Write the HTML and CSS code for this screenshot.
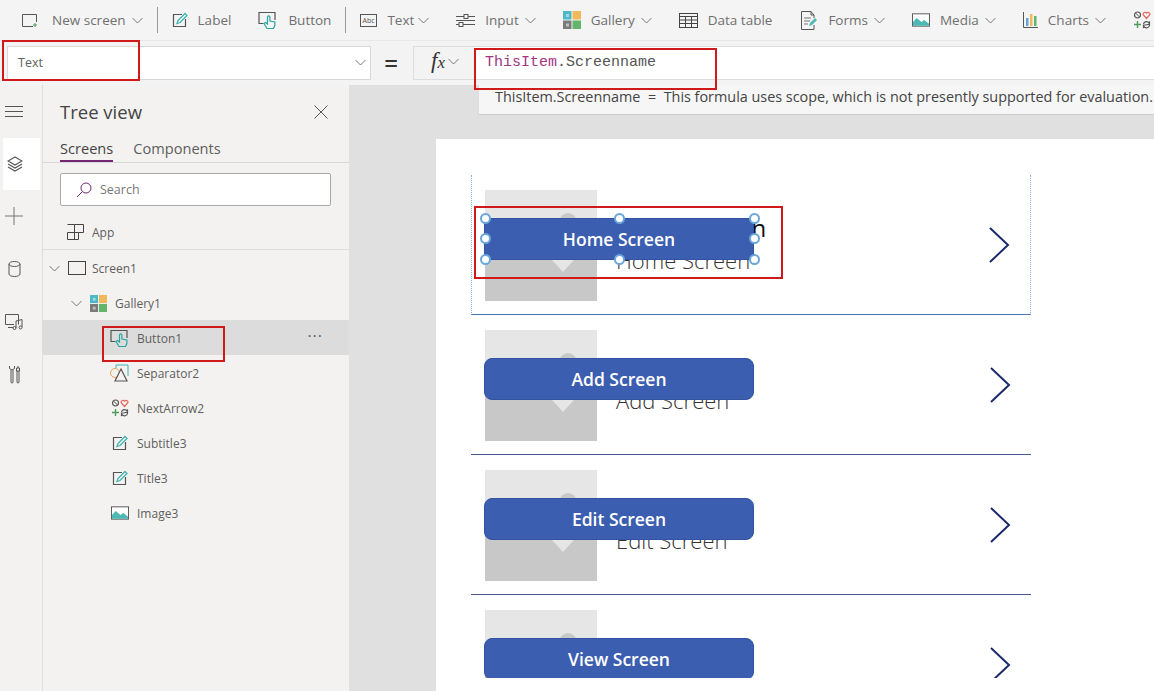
FILE: index.html
```html
<!DOCTYPE html>
<html lang="en">

<head>
  <meta charset="UTF-8">
  <meta name="viewport" content="width=device-width, initial-scale=1.0">
  <title>Tree view - Gallery buttons</title>
  <link rel="stylesheet" href="styles.css">
</head>

<body>
  <svg class="defs" width="0" height="0">
    <symbol id="i-chev" viewBox="0 0 11 7"><path d="M.5 1l5 5 5-5" fill="none" stroke="#777"/></symbol>
    <symbol id="i-edit" viewBox="0 0 16 16">
      <path d="M10 2.500H1.500v12h12V7" fill="none" stroke="#555" stroke-width="1.200"/>
      <path d="M5 11.500l1-3L13 1.500l2 2-7 7z" fill="none" stroke="#3fb3ad" stroke-width="1.300"/>
    </symbol>
    <symbol id="i-button" viewBox="0 0 20 18">
      <path d="M5.500 12.500H1V1.500h16v7.500" fill="none" stroke="#555" stroke-width="1.200"/>
      <path d="M9 17.500l-3-5 1.500-1 2 1.500V6a1.200 1.200 0 0 1 2.400 0v4l5 1v3.500l-1.500 3z" fill="none" stroke="#2aa5a0" stroke-width="1.200"/>
    </symbol>
    <symbol id="i-gallery" viewBox="0 0 18 18">
      <rect x="0" y="0" width="8.500" height="8.500" fill="#4db8c8"/>
      <rect x="9.500" y="0" width="8.500" height="8.500" fill="#f2b95c"/>
      <rect x="0" y="9.500" width="8.500" height="8.500" fill="#7a7a7a"/>
      <rect x="9.500" y="9.500" width="8.500" height="8.500" fill="#63b56b"/>
      <rect x="3" y="3" width="3" height="3" fill="#9adbe4"/>
      <rect x="3" y="12.500" width="3" height="3" fill="#bdbdbd"/>
    </symbol>
    <symbol id="i-image" viewBox="0 0 19 14">
      <rect x=".5" y=".5" width="18" height="13" fill="#fff" stroke="#555"/>
      <path d="M1 13V9l4-4 5 4 3-2 5 4v2z" fill="#4db8b4"/>
    </symbol>
    <symbol id="i-icons" viewBox="0 0 18 18">
      <circle cx="4.500" cy="4" r="3" fill="none" stroke="#555" stroke-width="1.200"/>
      <path d="M2.500 2l4 4" stroke="#555"/>
      <path d="M13.500 7.500L10 3.500a2 2 0 0 1 3.500-1.500A2 2 0 0 1 17 3.500z" fill="none" stroke="#e8685c" stroke-width="1.200"/>
      <path d="M4.500 10v7M1 13.500h7" stroke="#4f9b59" stroke-width="1.400"/>
      <path d="M10.500 13a3 3 0 0 1 5.500-1l.5-1.500v3h-3M16.500 14a3 3 0 0 1-5.500 1.500l-.5 1.500v-3h3" fill="none" stroke="#555" stroke-width="1.200"/>
    </symbol>
    <symbol id="thumb" viewBox="0 0 112 111">
      <rect width="112" height="111" fill="#e6e6e6"/>
      <circle cx="83" cy="32" r="9" fill="#c8c8c8"/>
      <rect y="52" width="112" height="59" fill="#c8c8c8"/>
      <path d="M58 60h40L78 82z" fill="#e6e6e6"/>
    </symbol>
  </svg>

  <div class="toolbar">
    <div class="tool tool-first">
      <svg class="ico" width="16" height="16" viewBox="0 0 16 16"><path d="M11 14.500H.5v-12h14V10" fill="none" stroke="#555"/><path d="M13 11v4M11 13h4" stroke="#4f9b59"/></svg>
      <span>New screen</span><svg class="chev" width="11" height="7"><use href="#i-chev"/></svg>
    </div>
    <div class="sep"></div>
    <div class="tool"><svg class="ico" width="16" height="16"><use href="#i-edit"/></svg><span>Label</span></div>
    <div class="tool"><svg class="ico" width="20" height="18"><use href="#i-button"/></svg><span>Button</span></div>
    <div class="sep"></div>
    <div class="tool tool-text">
      <svg class="ico" width="17" height="13" viewBox="0 0 17 13"><rect x=".5" y=".5" width="16" height="12" fill="none" stroke="#555"/><text x="8.500" y="9" text-anchor="middle" class="abc">Abc</text></svg>
      <span>Text</span><svg class="chev" width="11" height="7"><use href="#i-chev"/></svg>
    </div>
    <div class="tool">
      <svg class="ico" width="19" height="17" viewBox="0 0 19 17"><path d="M0 4.500h8M12 4.500h7M0 12.500h3M7 12.500h12M0 8.500h19" stroke="#555" fill="none"/><rect x="8" y="2.500" width="4" height="4" fill="none" stroke="#555"/><rect x="3" y="10.500" width="4" height="4" fill="none" stroke="#555"/></svg>
      <span>Input</span><svg class="chev" width="11" height="7"><use href="#i-chev"/></svg>
    </div>
    <div class="tool"><svg class="ico" width="18" height="18"><use href="#i-gallery"/></svg><span>Gallery</span><svg class="chev" width="11" height="7"><use href="#i-chev"/></svg></div>
    <div class="tool">
      <svg class="ico" width="19" height="15" viewBox="0 0 19 15"><rect x=".5" y=".5" width="18" height="14" fill="none" stroke="#444"/><path d="M.5 3.500h18M.5 7h18M.5 10.500h18M6.500 3.500v11M12.500 3.500v11" stroke="#444" fill="none"/></svg>
      <span>Data table</span>
    </div>
    <div class="tool tool-forms">
      <svg class="ico" width="18" height="19" viewBox="0 0 18 19"><path d="M11 .5H1.500v18H14V14M11 .5L14 4v3M11 .5V4h3" fill="none" stroke="#555"/><path d="M4 7h7M4 10h6M4 13h4" stroke="#777"/><path d="M9 15l1-3 5-5 2 2-5 5z" fill="#4db8b4"/></svg>
      <span>Forms</span><svg class="chev" width="11" height="7"><use href="#i-chev"/></svg>
    </div>
    <div class="tool"><svg class="ico" width="18" height="14"><use href="#i-image"/></svg><span>Media</span><svg class="chev" width="11" height="7"><use href="#i-chev"/></svg></div>
    <div class="tool">
      <svg class="ico" width="15" height="16" viewBox="0 0 15 16"><path d="M.5 0v15.500H15" fill="none" stroke="#555"/><rect x="3" y="6" width="2.500" height="8" fill="#63a6d9"/><rect x="7" y="2" width="2.500" height="12" fill="#f2b95c"/><rect x="11" y="4" width="2.500" height="10" fill="#63b56b"/></svg>
      <span>Charts</span><svg class="chev" width="11" height="7"><use href="#i-chev"/></svg>
    </div>
    <div class="tool"><svg class="ico" width="18" height="18"><use href="#i-icons"/></svg></div>
  </div>

  <div class="formula-bar">
    <div class="prop-select">
      <span>Text</span>
      <svg class="chev" width="11" height="7"><use href="#i-chev"/></svg>
    </div>
    <div class="equals">=</div>
    <div class="fx-box">
      <span class="fx">f<i>x</i></span>
      <svg class="chev" width="11" height="7"><use href="#i-chev"/></svg>
    </div>
    <div class="formula"><span class="kw">ThisItem</span>.Screenname</div>
  </div>

  <div class="main">
    <div class="rail">
      <div class="rail-item">
        <svg width="18" height="13" viewBox="0 0 18 13"><path d="M0 1.500h18M0 6.500h18M0 11.500h18" stroke="#555"/></svg>
      </div>
      <div class="rail-item rail-active">
        <svg width="16" height="16" viewBox="0 0 16 16"><path d="M8 1l7 4-7 4-7-4zM1 8l7 4 7-4M1 11l7 4 7-4" fill="none" stroke="#555" stroke-width="1.100"/></svg>
      </div>
      <div class="rail-item">
        <svg width="18" height="18" viewBox="0 0 18 18"><path d="M9 0v18M0 9h18" stroke="#777"/></svg>
      </div>
      <div class="rail-item">
        <svg width="13" height="16" viewBox="0 0 13 16"><ellipse cx="6.500" cy="3" rx="5.500" ry="2.500" fill="none" stroke="#555"/><path d="M1 3v10c0 1.500 2.500 2.500 5.500 2.500S12 14.500 12 13V3" fill="none" stroke="#555"/></svg>
      </div>
      <div class="rail-item">
        <svg width="19" height="16" viewBox="0 0 19 16"><path d="M13.500 10.500V.5H.5v10H9" fill="none" stroke="#555"/><path d="M3 13.500h5M11 14V7l6-1.500V13" fill="none" stroke="#555"/><circle cx="9.500" cy="14" r="1.500" fill="none" stroke="#555"/><circle cx="15.500" cy="13.500" r="1.500" fill="none" stroke="#555"/></svg>
      </div>
      <div class="rail-item">
        <svg width="13" height="19" viewBox="0 0 13 19"><path d="M3 5v12a1 1 0 0 0 1 1h0a1 1 0 0 0 1-1V5M1.500 1v2.500L4 5l2.500-1.500V1M10 1v2M8.500 3h3v3h-3zM9 6v11a1 1 0 0 0 2 0V6" fill="none" stroke="#555"/></svg>
      </div>
    </div>

    <aside class="panel">
      <div class="panel-head">
        <h2>Tree view</h2>
        <svg width="14" height="14" viewBox="0 0 14 14"><path d="M.5.500l13 13M13.500.500l-13 13" stroke="#555"/></svg>
      </div>
      <div class="tabs">
        <div class="tab tab-on">Screens</div>
        <div class="tab">Components</div>
      </div>
      <div class="search">
        <svg width="16" height="16" viewBox="0 0 16 16"><circle cx="10" cy="6" r="5" fill="none" stroke="#742774"/><path d="M6.500 9.500L1 15" stroke="#742774"/></svg>
        <span>Search</span>
      </div>
      <div class="node node-app">
        <svg width="17" height="16" viewBox="0 0 17 16"><path d="M.5 8.500h11v7H.5zM.5.500h7v15M7.500.500h9v8h-5" fill="none" stroke="#444"/></svg>
        <span>App</span>
      </div>
      <div class="node node-screen">
        <svg class="twist" width="11" height="7"><use href="#i-chev"/></svg>
        <svg width="18" height="14" viewBox="0 0 18 14"><rect x=".5" y=".5" width="17" height="13" fill="none" stroke="#444"/></svg>
        <span>Screen1</span>
      </div>
      <div class="node node-gallery">
        <svg class="twist" width="11" height="7"><use href="#i-chev"/></svg>
        <svg width="17" height="17"><use href="#i-gallery"/></svg>
        <span>Gallery1</span>
      </div>
      <div class="node node-child node-selected">
        <svg width="20" height="18"><use href="#i-button"/></svg>
        <span>Button1</span>
        <span class="dots">···</span>
      </div>
      <div class="node node-child">
        <svg width="20" height="18" viewBox="0 0 20 18"><path d="M6 1h12v11" fill="none" stroke="#3fb3ad"/><path d="M6 1v3" stroke="#3fb3ad"/><circle cx="5" cy="9" r="4.500" fill="none" stroke="#e9a15c"/><path d="M11 5l6 12H5z" fill="#f3f2f1" stroke="#555" stroke-width="1.200"/></svg>
        <span>Separator2</span>
      </div>
      <div class="node node-child">
        <svg width="20" height="18"><use href="#i-icons"/></svg>
        <span>NextArrow2</span>
      </div>
      <div class="node node-child">
        <svg class="ico-16" width="16" height="16"><use href="#i-edit"/></svg>
        <span>Subtitle3</span>
      </div>
      <div class="node node-child">
        <svg class="ico-16" width="16" height="16"><use href="#i-edit"/></svg>
        <span>Title3</span>
      </div>
      <div class="node node-child">
        <svg class="ico-18" width="18" height="14"><use href="#i-image"/></svg>
        <span>Image3</span>
      </div>
    </aside>

    <div class="stage">
      <div class="hint">ThisItem.Screenname &nbsp;=&nbsp; This formula uses scope, which is not presently supported for evaluation.</div>
      <div class="canvas">
        <div class="gallery">
          <div class="row row-first">
            <svg class="thumb"><use href="#thumb"/></svg>
            <div class="row-text"><div class="title">Home Screen</div><div class="subtitle">Home Screen</div></div>
            <svg class="next" width="21" height="36" viewBox="0 0 21 36"><path d="M1 1l18 17L1 35" fill="none" stroke="#1a2a6c" stroke-width="2"/></svg>
            <div class="btn">Home Screen</div>
            <i class="h h-tl"></i><i class="h h-tc"></i><i class="h h-tr"></i><i class="h h-ml"></i>
            <i class="h h-mr"></i><i class="h h-bl"></i><i class="h h-bc"></i><i class="h h-br"></i>
          </div>
          <div class="row">
            <svg class="thumb"><use href="#thumb"/></svg>
            <div class="row-text"><div class="title">Add Screen</div><div class="subtitle">Add Screen</div></div>
            <svg class="next" width="21" height="36" viewBox="0 0 21 36"><path d="M1 1l18 17L1 35" fill="none" stroke="#1a2a6c" stroke-width="2"/></svg>
            <div class="btn">Add Screen</div>
          </div>
          <div class="row">
            <svg class="thumb"><use href="#thumb"/></svg>
            <div class="row-text"><div class="title">Edit Screen</div><div class="subtitle">Edit Screen</div></div>
            <svg class="next" width="21" height="36" viewBox="0 0 21 36"><path d="M1 1l18 17L1 35" fill="none" stroke="#1a2a6c" stroke-width="2"/></svg>
            <div class="btn">Edit Screen</div>
          </div>
          <div class="row">
            <svg class="thumb"><use href="#thumb"/></svg>
            <div class="row-text"><div class="title">View Screen</div><div class="subtitle">View Screen</div></div>
            <svg class="next" width="21" height="36" viewBox="0 0 21 36"><path d="M1 1l18 17L1 35" fill="none" stroke="#1a2a6c" stroke-width="2"/></svg>
            <div class="btn">View Screen</div>
          </div>
        </div>
      </div>
    </div>
  </div>

  <div class="mark mark-prop"></div>
  <div class="mark mark-formula"></div>
  <div class="mark mark-node"></div>
  <div class="mark mark-btn"></div>
</body>

</html>
```
FILE: styles.css
```css
* {
  box-sizing: border-box;
}

html,
body {
  margin: 0;
  height: 691px;
  overflow: hidden;
}

body {
  position: relative;
  font-family: "Open Sans", sans-serif;
  color: #605e5c;
  background-color: #f3f2f1;
  font-size: 13px;
}

.defs {
  position: absolute;
}

svg {
  display: block;
  flex: none;
}

/* top ribbon */
.toolbar {
  height: 40px;
  display: flex;
  align-items: center;
  gap: 27px;
  padding-left: 22px;
  background-color: #f4f4f4;
  white-space: nowrap;
  overflow: hidden;
  font-size: 13.500px;
  color: #707070;
}

.tool {
  display: flex;
  align-items: center;
  flex: none;
}

.tool .ico {
  margin-right: 10px;
}

.tool .chev {
  margin-left: 6px;
}

.tool-first .ico {
  margin-right: 14px;
}

.tool-text .chev {
  margin-left: 4px;
}

.tool-forms {
  margin-left: 1px;
}

.abc {
  font-size: 7px;
  fill: #555;
}

.sep {
  width: 1px;
  height: 26px;
  background-color: #999;
  margin: 0 -13px;
  flex: none;
}

/* formula row */
.formula-bar {
  height: 45px;
  display: flex;
  align-items: flex-start;
  padding: 5px 0 0 7px;
  background-color: #f3f3f3;
  border-top: 1px solid #e8e8e8;
}

.prop-select {
  width: 364px;
  height: 34px;
  display: flex;
  align-items: center;
  justify-content: space-between;
  padding: 0 4px 2px 10px;
  background-color: #fff;
  border: 1px solid #d8d8d8;
  font-size: 12.500px;
}

.equals {
  width: 42px;
  padding-right: 2px;
  text-align: center;
  font-size: 24px;
  font-weight: 600;
  line-height: 34px;
  color: #333;
}

.fx-box {
  width: 61px;
  height: 34px;
  display: flex;
  align-items: center;
  gap: 3px;
  padding: 0 0 4px 17px;
  border: 1px solid #dcdcdc;
  border-right: 0;
}

.fx {
  font-family: "Liberation Serif", serif;
  font-style: italic;
  font-size: 23px;
  color: #333;
}

.fx i {
  font-size: 17px;
}

.formula {
  flex: 1;
  height: 34px;
  padding-left: 11px;
  background-color: #fff;
  border-top: 1px solid #dcdcdc;
  border-bottom: 1px solid #dcdcdc;
  font-family: "Liberation Mono", monospace;
  font-size: 15px;
  line-height: 31px;
  color: #555;
}

.kw {
  color: #a3347f;
}

.main {
  height: 606px;
  display: flex;
}

/* icon rail */
.rail {
  width: 42px;
  flex: none;
  background-color: #f3f2f1;
}

.rail-item {
  height: 52.600px;
  width: 28px;
  display: flex;
  align-items: center;
  justify-content: center;
}

.rail-active {
  width: 37px;
  margin-left: 3px;
  padding-right: 14px;
  background-color: #fff;
}

/* tree panel */
.panel {
  width: 307px;
  flex: none;
  background-color: #f3f2f1;
  border-left: 1px solid #ddd;
}

.panel-head {
  height: 53px;
  display: flex;
  align-items: center;
  justify-content: space-between;
  padding: 0 21px 0 17px;
}

.panel-head h2 {
  margin: 0;
  font-size: 18.500px;
  font-weight: 500;
  color: #444;
}

.tabs {
  display: flex;
  gap: 20px;
  height: 25px;
  padding-left: 17px;
  border-bottom: 1px solid #d8d8d8;
  font-size: 14.600px;
  line-height: 20px;
}

.tab-on {
  height: 24px;
  color: #444;
  border-bottom: 2px solid #742774;
}

.search {
  display: flex;
  align-items: center;
  gap: 8px;
  width: 271px;
  height: 33px;
  margin: 10px 0 0 17px;
  padding-left: 15px;
  background-color: #fff;
  border: 1px solid #aaa;
  border-radius: 2px;
  font-size: 12.500px;
  color: #777;
}

.node {
  position: relative;
  height: 35px;
  display: flex;
  align-items: center;
  gap: 8px;
  padding-top: 1px;
  font-size: 12px;
}

.node-app {
  height: 44px;
  padding: 9px 0 0 24px;
  border-bottom: 1px solid #dcdcdc;
}

.node-screen {
  padding-left: 6px;
}

.node-screen span {
  margin-left: -2px;
}

.node-gallery {
  padding-left: 28px;
}

.node-child {
  padding-left: 67px;
}

.node-child span:first-of-type {
  margin-left: -1px;
}

.ico-16 {
  margin: 0 2px;
}

.ico-18 {
  margin: 0 1px;
}

.node-selected {
  background-color: #dcdcdc;
}

.dots {
  position: absolute;
  right: 26px;
  top: 5px;
  font-size: 16px;
  letter-spacing: 1px;
}

/* canvas */
.stage {
  position: relative;
  flex: 1;
  padding: 54px 0 0 87px;
  background-color: #e0e0e0;
  overflow: hidden;
}

.hint {
  position: absolute;
  left: 129px;
  top: 0;
  right: 0;
  height: 30px;
  padding-left: 16px;
  background-color: #f6f6f6;
  border-bottom: 1px solid #ccc;
  border-left: 1px solid #ddd;
  font-size: 14.400px;
  line-height: 24px;
  color: #444;
  white-space: nowrap;
  overflow: hidden;
}

.canvas {
  height: 552px;
  padding: 36px 0 0 35px;
  background-color: #fff;
}

.gallery {
  width: 560px;
  height: 503px;
  overflow: hidden;
}

.row {
  position: relative;
  height: 140px;
  display: flex;
  padding: 15px 20px 0 14px;
  border-bottom: 1px solid #4a5a8c;
}

.row-first {
  border-left: 1px dotted #7fb2dc;
  border-right: 1px dotted #7fb2dc;
  border-bottom-color: #4a74b4;
  padding-left: 13px;
}

.thumb {
  width: 112px;
  height: 111px;
}

.row-text {
  flex: 1;
  margin-left: 19px;
  padding-top: 19px;
  white-space: nowrap;
}

.title {
  font-size: 24px;
  line-height: 37px;
  color: #111;
}

.subtitle {
  font-size: 22px;
  font-weight: 300;
  line-height: 28px;
  color: #333;
}

.next {
  margin-top: 37px;
}

.btn {
  position: absolute;
  left: 13px;
  top: 43px;
  width: 270px;
  height: 42px;
  display: flex;
  align-items: center;
  justify-content: center;
  background-color: #3b5eb0;
  border: 1px solid #3352a0;
  border-radius: 8px;
  color: #fff;
  font-size: 17.500px;
  font-weight: 600;
}

.row-first .btn {
  left: 12px;
  border-radius: 2px;
}

.h {
  position: absolute;
  width: 11px;
  height: 11px;
  background-color: #fff;
  border: 2px solid #6aa6da;
  border-radius: 50%;
}

.h-tl { left: 8px; top: 38px; }
.h-tc { left: 142px; top: 38px; }
.h-tr { left: 277px; top: 38px; }
.h-ml { left: 8px; top: 58px; }
.h-mr { left: 277px; top: 58px; }
.h-bl { left: 8px; top: 79px; }
.h-bc { left: 142px; top: 79px; }
.h-br { left: 277px; top: 79px; }

/* red callouts drawn over the shot */
.mark {
  position: absolute;
  border: 2px solid #d01a1a;
}

.mark-prop {
  left: 2px;
  top: 40px;
  width: 138px;
  height: 41px;
}

.mark-formula {
  left: 474px;
  top: 48px;
  width: 243px;
  height: 42px;
}

.mark-node {
  left: 102px;
  top: 326px;
  width: 123px;
  height: 36px;
}

.mark-btn {
  left: 474px;
  top: 206px;
  width: 309px;
  height: 73px;
}
```
